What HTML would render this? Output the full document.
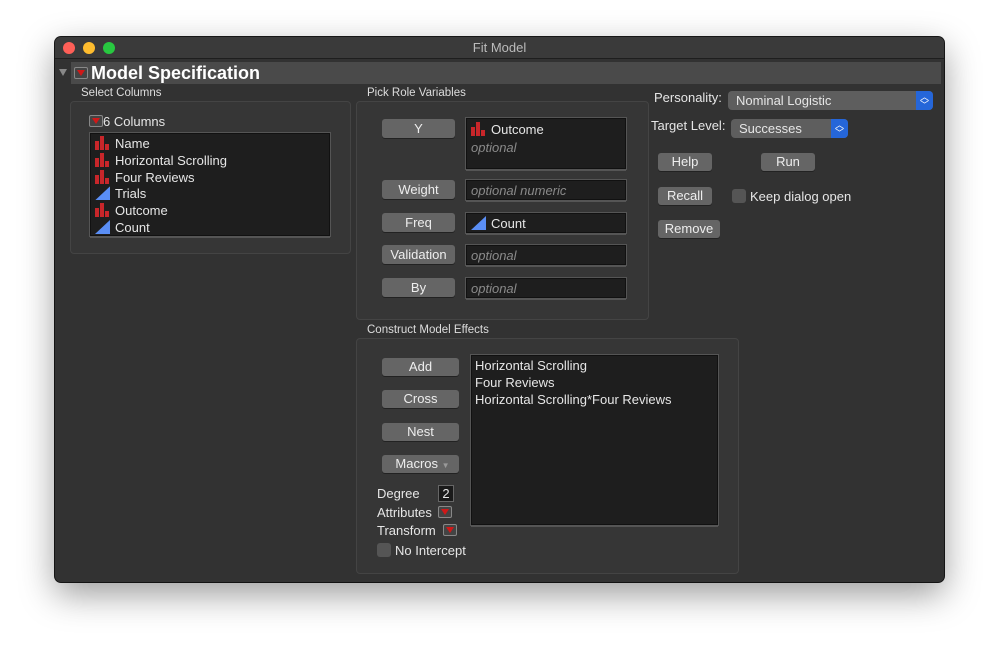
<!DOCTYPE html>
<html><head><style>
*{box-sizing:border-box;margin:0;padding:0}
body{width:999px;height:655px;background:#fff;font-family:"Liberation Sans",sans-serif;position:relative;overflow:hidden;color:#e6e6e6;font-size:13px}
.win{position:absolute;left:55px;top:37px;width:889px;height:545px;background:#323232;border-radius:6px;box-shadow:0 12px 35px rgba(0,0,0,.4),0 0 0 1px #1a1a1a;overflow:hidden}
.tb{position:absolute;left:0;top:0;width:100%;height:22px;background:#3a3a3a;border-bottom:1px solid #1e1e1e;text-align:center;line-height:22px;color:#bbb;font-size:13px}
.dot{position:absolute;top:5px;width:12px;height:12px;border-radius:50%}
.a{position:absolute}
.lbl{position:absolute;font-size:11.5px;color:#ddd}
.grp{position:absolute;border:1px solid #444;border-radius:4px;background:#363636}
.btn{position:absolute;background:#656565;border-radius:3px;text-align:center;color:#eee;font-size:13px;box-shadow:0 1px 0 #222}
.fld{position:absolute;background:#1e1e1e;border:1px solid #111;box-shadow:0 0 0 1px #555,0 2px 0 #555}
.opt{color:#8a8a8a;font-style:italic}
.nom{display:inline-block;width:15px;height:14px;vertical-align:-2px;margin-right:5px;position:relative}
.nom i{position:absolute;bottom:0;background:#c8262a;width:4px}
.ct{display:inline-block;width:15px;height:14px;vertical-align:-2px;margin-right:5px;background:#5a8ef5;clip-path:polygon(100% 0,100% 100%,0 100%)}
.tri{display:inline-block;width:14px;height:12px;border:1px solid #888;border-radius:2px;background:#444;position:relative;vertical-align:-1px}
.tri:after{content:"";position:absolute;left:2px;top:2px;border-left:4px solid transparent;border-right:4px solid transparent;border-top:6px solid #d01818}
.cb{position:absolute;width:14px;height:14px;background:#555;border-radius:3px}
</style></head><body>
<div class="win">
 <div class="tb">Fit Model</div>
 <div class="dot" style="left:8px;background:#fe5f57"></div>
 <div class="dot" style="left:28px;background:#febc2e"></div>
 <div class="dot" style="left:48px;background:#28c840"></div>
 <div class="a" style="left:4px;top:32px;border-left:4px solid transparent;border-right:4px solid transparent;border-top:7px solid #888"></div>
 <div class="a" style="left:16px;top:25px;width:870px;height:22px;background:#4a4a4a"></div>
 <div class="a" style="left:19px;top:29px"><span class="tri"></span></div>
 <div class="a" style="left:36px;top:25px;font-size:18px;font-weight:bold;color:#fff;line-height:22px">Model Specification</div>

 <div class="lbl" style="left:26px;top:50px">Select Columns</div>
 <div class="grp" style="left:15px;top:64px;width:281px;height:153px"></div>
 <div class="a" style="left:34px;top:77px;font-size:13px"><span class="tri"></span>6 Columns</div>
 <div class="fld" style="left:35px;top:96px;width:240px;height:103px;padding:2px 4px;line-height:16.8px">
  <div><span class="nom"><i style="left:0;height:9px"></i><i style="left:5px;height:14px"></i><i style="left:10px;height:6px"></i></span>Name</div>
  <div><span class="nom"><i style="left:0;height:9px"></i><i style="left:5px;height:14px"></i><i style="left:10px;height:6px"></i></span>Horizontal Scrolling</div>
  <div><span class="nom"><i style="left:0;height:9px"></i><i style="left:5px;height:14px"></i><i style="left:10px;height:6px"></i></span>Four Reviews</div>
  <div><span class="ct"></span>Trials</div>
  <div><span class="nom"><i style="left:0;height:9px"></i><i style="left:5px;height:14px"></i><i style="left:10px;height:6px"></i></span>Outcome</div>
  <div><span class="ct"></span>Count</div>
 </div>

 <div class="lbl" style="left:312px;top:50px">Pick Role Variables</div>
 <div class="grp" style="left:301px;top:64px;width:293px;height:219px"></div>
 <div class="btn" style="left:327px;top:82px;width:73px;height:19px;line-height:19px">Y</div>
 <div class="fld" style="left:411px;top:81px;width:160px;height:51px;padding:2px 4px;line-height:18px"><div><span class="nom"><i style="left:0;height:9px"></i><i style="left:5px;height:14px"></i><i style="left:10px;height:6px"></i></span>Outcome</div><div class="opt">optional</div></div>
 <div class="btn" style="left:327px;top:143px;width:73px;height:19px;line-height:19px">Weight</div>
 <div class="fld" style="left:411px;top:143px;width:160px;height:20px;padding:0 4px;line-height:20px"><span class="opt">optional numeric</span></div>
 <div class="btn" style="left:327px;top:176px;width:73px;height:19px;line-height:19px">Freq</div>
 <div class="fld" style="left:411px;top:176px;width:160px;height:20px;padding:0 4px;line-height:20px"><span class="ct"></span>Count</div>
 <div class="btn" style="left:327px;top:208px;width:73px;height:19px;line-height:19px">Validation</div>
 <div class="fld" style="left:411px;top:208px;width:160px;height:20px;padding:0 4px;line-height:20px"><span class="opt">optional</span></div>
 <div class="btn" style="left:327px;top:241px;width:73px;height:19px;line-height:19px">By</div>
 <div class="fld" style="left:411px;top:241px;width:160px;height:20px;padding:0 4px;line-height:20px"><span class="opt">optional</span></div>

 <div class="a" style="left:599px;top:53px;font-size:13px">Personality:</div>
 <div class="a" style="left:673px;top:54px;width:205px;height:19px;background:#5e5e5e;border-radius:4px;padding-left:8px;line-height:19px">Nominal Logistic</div>
 <div class="a" style="left:861px;top:54px;width:17px;height:19px;background:#2566d9;border-radius:0 4px 4px 0;font-size:9px;text-align:center;line-height:8px;padding-top:2px;color:#fff">︿<br>﹀</div>
 <div class="a" style="left:596px;top:81px;font-size:13px">Target Level:</div>
 <div class="a" style="left:676px;top:82px;width:117px;height:19px;background:#5e5e5e;border-radius:4px;padding-left:8px;line-height:19px">Successes</div>
 <div class="a" style="left:776px;top:82px;width:17px;height:19px;background:#2566d9;border-radius:0 4px 4px 0;font-size:9px;text-align:center;line-height:8px;padding-top:2px;color:#fff">︿<br>﹀</div>
 <div class="btn" style="left:603px;top:116px;width:54px;height:18px;line-height:18px">Help</div>
 <div class="btn" style="left:706px;top:116px;width:54px;height:18px;line-height:18px">Run</div>
 <div class="btn" style="left:603px;top:150px;width:54px;height:18px;line-height:18px">Recall</div>
 <div class="cb" style="left:677px;top:152px"></div>
 <div class="a" style="left:695px;top:152px">Keep dialog open</div>
 <div class="btn" style="left:603px;top:183px;width:62px;height:18px;line-height:18px">Remove</div>

 <div class="lbl" style="left:312px;top:287px">Construct Model Effects</div>
 <div class="grp" style="left:301px;top:301px;width:383px;height:236px"></div>
 <div class="btn" style="left:327px;top:321px;width:77px;height:18px;line-height:18px">Add</div>
 <div class="btn" style="left:327px;top:353px;width:77px;height:18px;line-height:18px">Cross</div>
 <div class="btn" style="left:327px;top:386px;width:77px;height:18px;line-height:18px">Nest</div>
 <div class="btn" style="left:327px;top:418px;width:77px;height:18px;line-height:18px;padding-left:4px">Macros <span style="color:#999;font-size:8px">▼</span></div>
 <div class="fld" style="left:416px;top:318px;width:247px;height:170px;padding:2px 3px;line-height:16.8px"><div>Horizontal Scrolling</div><div>Four Reviews</div><div>Horizontal Scrolling*Four Reviews</div></div>
 <div class="a" style="left:322px;top:449px">Degree</div>
 <div class="a" style="left:383px;top:448px;width:16px;height:17px;background:#1a1a1a;border:1px solid #666;text-align:center;line-height:15px">2</div>
 <div class="a" style="left:322px;top:468px">Attributes <span class="tri" style="margin-left:2px"></span></div>
 <div class="a" style="left:322px;top:486px">Transform <span class="tri" style="margin-left:4px"></span></div>
 <div class="cb" style="left:322px;top:506px"></div>
 <div class="a" style="left:340px;top:506px">No Intercept</div>
</div>
</body></html>
